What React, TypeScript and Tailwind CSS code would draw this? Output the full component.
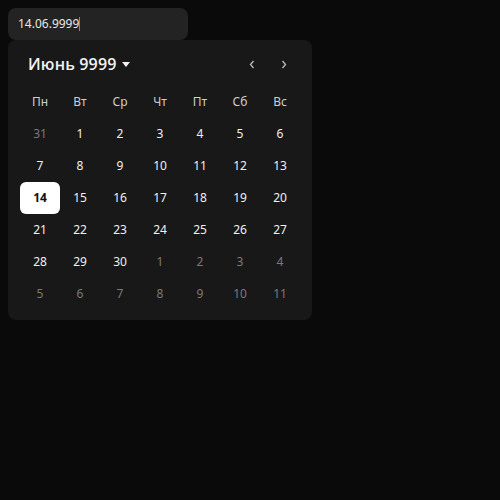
import React from 'react';

export default function App() {
  const weekdays = ['Пн', 'Вт', 'Ср', 'Чт', 'Пт', 'Сб', 'Вс'];
  const days: { d: number; out: boolean }[] = [{ d: 31, out: true }];
  for (let i = 1; i <= 30; i++) days.push({ d: i, out: false });
  for (let i = 1; i <= 11; i++) days.push({ d: i, out: true });

  return (
    <div className="min-h-[500px] w-[500px] bg-[#0a0a0a] p-2 font-['Noto_Sans',sans-serif]">
      <div className="flex h-8 w-[180px] items-center rounded-lg bg-[#232323] px-[10px] text-[12px] text-[#e8e8e8]">
        <span>14.06.9999</span>
        <span className="h-[14px] w-px bg-[#4a8cff]" />
      </div>
      <div className="w-[304px] rounded-lg bg-[#181818] px-3 pb-[10px] pt-[12px]">
        <div className="flex h-6 items-center justify-between">
          <div className="flex items-center gap-[5px] pl-2 font-['Open_Sans',sans-serif] text-[16px] font-semibold tracking-[0.01em] text-[#f2f2f2]">
            <span>Июнь 9999</span>
            <svg width="8" height="5" viewBox="0 0 8 5">
              <path d="M0 0h8L4 5z" fill="#f2f2f2" />
            </svg>
          </div>
          <div className="flex">
            <button className="flex h-6 w-8 items-center justify-center text-[#bbb]">
              <svg width="6" height="9" viewBox="0 0 6 9" fill="none" stroke="currentColor" strokeWidth="1.3">
                <path d="M4.5 1L1.5 4.5L4.5 8" />
              </svg>
            </button>
            <button className="flex h-6 w-8 items-center justify-center text-[#bbb]">
              <svg width="6" height="9" viewBox="0 0 6 9" fill="none" stroke="currentColor" strokeWidth="1.3">
                <path d="M1.5 1L4.5 4.5L1.5 8" />
              </svg>
            </button>
          </div>
        </div>
        <div className="mt-[10px] grid grid-cols-7">
          {weekdays.map((w) => (
            <div key={w} className="flex h-8 items-center justify-center text-[12px] text-[#cfcfcf]">
              {w}
            </div>
          ))}
          {days.map((x, i) => {
            const sel = !x.out && x.d === 14;
            return (
              <div
                key={i}
                className={
                  sel
                    ? 'flex h-8 items-center justify-center rounded-md bg-white text-[12px] font-bold text-[#111]'
                    : x.out
                    ? 'flex h-8 items-center justify-center text-[12px] text-[#7a7a7a]'
                    : 'flex h-8 items-center justify-center text-[12px] text-[#f0f0f0]'
                }
              >
                {x.d}
              </div>
            );
          })}
        </div>
      </div>
    </div>
  );
}
